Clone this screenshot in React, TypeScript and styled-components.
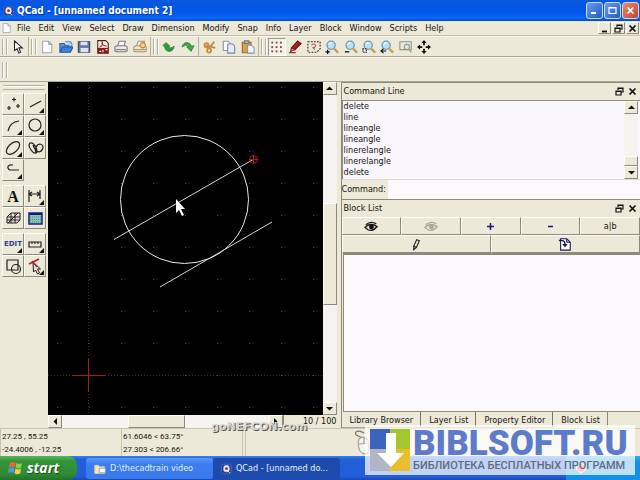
import React from "react";
import styled, { createGlobalStyle, css } from "styled-components";

const face = "#ece9d8";
const shade = "#8d8a7c";
const ui = `"DejaVu Sans Condensed", "DejaVu Sans", sans-serif`;

const GlobalStyle = createGlobalStyle`
  * { box-sizing: border-box; }
  body { margin: 0; background: ${face}; }
  button, input { font: inherit; color: inherit; margin: 0; padding: 0; border: 0; background: none; border-radius: 0; }
  svg { display: block; flex: none; }
`;

const Screen = styled.div`
  position: relative;
  display: flex;
  flex-direction: column;
  min-height: 100vh;
  font: 9px/11px ${ui};
  color: #16150f;
  background: ${face};
  overflow: hidden;
`;

const raised = css`
  border: 1px solid;
  border-color: #fffef8 ${shade} ${shade} #fffef8;
`;

/* Title bar */
const TitleBar = styled.header`
  display: flex;
  align-items: center;
  gap: 3px;
  height: 21px;
  padding: 0 1px 0 3px;
  background: linear-gradient(#0a5ae0 0, #0355e2 25%, #0458ea 60%, #0866fa 88%, #0345bd 100%);
`;
const Title = styled.h1`
  flex: 1;
  margin: 0;
  color: #fff;
  font: bold 10px/16px ${ui};
  text-shadow: 1px 1px 0 #0b3a96;
`;
const WindowButton = styled.button<{ $close?: boolean }>`
  display: grid;
  place-items: center;
  width: 17px;
  height: 17px;
  margin-left: -2px;
  border: 1px solid #c9dcfb;
  border-radius: 3px;
  color: #fff;
  background: ${(p) => (p.$close ? "linear-gradient(135deg,#e58a70,#c8432a)" : "linear-gradient(135deg,#6b9cf2,#2059cd)")};
`;

/* Menu bar */
const MenuBar = styled.nav`
  display: flex;
  align-items: center;
  gap: 8px;
  height: 15px;
  padding: 0 1px;
  border-bottom: 1px solid #c3bfae;
`;
const MenuIcon = styled.span`
  margin-right: -3px;
`;
const MenuItem = styled.button`
  line-height: 13px;
`;
const ChildButtons = styled.div`
  display: flex;
  margin-left: auto;
  gap: 1px;
`;
const ChildButton = styled.button`
  ${raised}
  display: grid;
  place-items: center;
  width: 13px;
  height: 12px;
`;

/* Toolbars */
const ToolBar = styled.div<{ $h: number }>`
  display: flex;
  align-items: center;
  height: ${(p) => p.$h}px;
  padding-left: 2px;
  border-bottom: 1px solid #aaa796;
  border-top: 1px solid #f8f6ec;
`;
const Grip = styled.span`
  width: 5px;
  height: 16px;
  margin-right: 2px;
  border: solid #b3b09f;
  border-width: 0 1px;
  box-shadow: inset 1px 0 #fff, 1px 0 #fff;
`;
const ToolGroup = styled.div<{ $w: number }>`
  display: flex;
  justify-content: space-between;
  width: ${(p) => p.$w}px;
`;
const ToolButton = styled.button<{ $on?: boolean }>`
  display: grid;
  place-items: center;
  width: 18px;
  height: 18px;
  ${(p) =>
    p.$on &&
    css`
      border: 1px solid;
      border-color: #9c998a #fff #fff #9c998a;
      background: #f3f1e8;
    `}
`;
const Divider = styled.span`
  width: 1px;
  height: 19px;
  margin: 0 2px 0 1px;
  background: #b5b2a2;
`;

/* Main area */
const Main = styled.main`
  display: flex;
  flex: 1;
  min-height: 0;
  border-bottom: 1px solid #c8c5b4;
`;
const Palette = styled.aside`
  width: 48px;
  flex: none;
  padding: 3px 2px;
`;
const PaletteGrip = styled.div`
  height: 5px;
  margin: 0 1px 3px;
  border: solid #b3b09f;
  border-width: 1px 0;
  box-shadow: inset 0 1px #fff;
`;
const PaletteGrid = styled.div`
  display: grid;
  grid-template-columns: 22px 22px;
  grid-auto-rows: 22px;
  margin-bottom: 4px;
`;
const PaletteButton = styled.button`
  ${raised}
  display: grid;
  place-items: center;
`;

const Document = styled.section`
  display: grid;
  grid-template-columns: minmax(0, 1fr) 14px;
  grid-template-rows: minmax(0, 1fr) 13px;
  flex: 289 1 0;
  min-width: 0;
`;
const Canvas = styled.div`
  background: #000;
  overflow: hidden;
`;
const VScroll = styled.div`
  display: flex;
  flex-direction: column;
  background: #f5f3f0;
`;
const HScroll = styled.div`
  display: flex;
  background: #f6f4f0;
`;
const Arrow = styled.button`
  ${raised}
  display: grid;
  place-items: center;
  flex: none;
  width: 14px;
  height: 13px;
  background: ${face};
`;
const Thumb = styled.div<{ $size: number }>`
  ${raised}
  flex: ${(p) => p.$size} 1 0;
  background: ${face};
`;
const Space = styled.div<{ $size: number }>`
  flex: ${(p) => p.$size} 1 0;
`;
const BottomRow = styled.div`
  grid-column: 1 / 3;
  display: grid;
  grid-template-columns: minmax(0, 1fr) 54px;
`;
const Zoom = styled.output`
  text-align: right;
  line-height: 12px;
  border-left: 1px solid ${shade};
`;

/* Docks */
const Docks = styled.section`
  display: flex;
  flex-direction: column;
  flex: 299 1 0;
  min-width: 0;
  margin-left: 4px;
  border-left: 1px solid ${shade};
`;
const DockHeader = styled.header`
  display: flex;
  align-items: center;
  gap: 3px;
  height: 18px;
  padding: 0 3px 0 2px;
  border-top: 1px solid ${shade};
`;
const DockTitle = styled.h2`
  flex: 1;
  margin: 0;
  font: inherit;
`;
const DockButton = styled.button`
  width: 10px;
  height: 12px;
  display: grid;
  place-items: center;
`;
const History = styled.div`
  display: flex;
  height: 79px;
  background: #f9f7fb;
  border-top: 1px solid ${shade};
  border-left: 1px solid ${shade};
  padding-right: 2px;
`;
const Lines = styled.ol`
  flex: 1;
  margin: 0;
  padding: 0 1px;
  list-style: none;
`;
const CommandRow = styled.div`
  display: flex;
  align-items: stretch;
  height: 20px;
  border-top: 1px solid #dedbd0;
`;
const CommandLabel = styled.label`
  width: 46px;
  line-height: 18px;
`;
const CommandInput = styled.input`
  flex: 1;
  min-width: 0;
  background: #fbf9fb;
`;
const ButtonRow = styled.div`
  display: flex;
  height: 18px;
`;
const BlockButton = styled.button`
  ${raised}
  flex: 1;
  display: grid;
  place-items: center;
`;
const BlockArea = styled.div`
  flex: 1;
  margin-left: 1px;
  background: #fbf9fb;
  border: solid ${shade};
  border-width: 2px 0 1px 1px;
`;
const Tabs = styled.div`
  display: flex;
  height: 16px;
`;
const Tab = styled.button<{ $on?: boolean }>`
  padding: 0 7px 0 8px;
  line-height: 14px;
  border-right: 1px solid ${(p) => (p.$on ? shade : "#77756a")};
  border-bottom: 1px solid ${(p) => (p.$on ? face : "#aaa796")};
`;

/* Status bar and task bar */
const StatusBar = styled.footer`
  display: flex;
  height: 27px;
`;
const StatusCell = styled.div<{ $w?: number }>`
  ${(p) => (p.$w ? `width: ${p.$w}px;` : "flex: 1;")}
  padding: 1px 1px 0;
  font: 8px/13px Roboto, sans-serif;
  white-space: pre;
  border-left: 1px solid #c6c3b2;
`;
const MousePad = styled.div`
  padding-left: 107px;
`;
const TaskBar = styled.footer`
  display: flex;
  height: 24px;
  background: linear-gradient(#3a80ee, #2160d8 15%, #225ddb 85%, #1a48b4);
`;
const Start = styled.button`
  display: flex;
  align-items: center;
  gap: 4px;
  width: 77px;
  padding-left: 8px;
  color: #fff;
  border-radius: 0 9px 9px 0;
  background: linear-gradient(#5eb45c, #35953a 20%, #318c35 75%, #22702a);
  font: italic bold 14px/20px "Open Sans", sans-serif;
  text-shadow: 1px 1px 1px #174d1a;
`;
const Task = styled.button<{ $active?: boolean }>`
  display: flex;
  align-items: center;
  gap: 4px;
  width: 127px;
  margin: 2px 0 1px;
  padding-left: 8px;
  color: #e4eeff;
  border-radius: 3px;
  background: ${(p) => (p.$active ? "#1e4bab" : "linear-gradient(#5c98fa,#3b7df0 30%,#3a79e9)")};
`;
const TaskList = styled.div`
  display: flex;
  flex: 1;
  margin-left: 9px;
`;
const Tray = styled.div`
  display: flex;
  align-items: center;
  width: 74px;
  padding-left: 9px;
  background: linear-gradient(#31b0f5, #128ee8 25%, #1290ea);
`;

/* Marks lying over the desktop */
const SiteMark = styled.div`
  position: absolute;
  left: 33%;
  bottom: 45px;
  color: #d9d7cf;
  font: bold 11px/16px "DejaVu Sans", sans-serif;
  text-shadow: 1px 1px 0 #55534b;
`;
const Badge = styled.aside`
  position: absolute;
  right: 5px;
  bottom: 5px;
  display: flex;
  align-items: center;
  gap: 3px;
  width: 270px;
  height: 50px;
  padding-left: 5px;
  background: rgba(255, 255, 255, 0.72);
`;
const BadgeText = styled.div`
  display: flex;
  flex-direction: column;
`;
const BadgeName = styled.strong`
  color: #5d7bcb;
  font: 900 35px/30px Roboto, sans-serif;
`;
const BadgeNote = styled.span`
  color: #626a80;
  font: 500 11px/13px Roboto, sans-serif;
  white-space: nowrap;
`;

type IconProps = { w?: number; h?: number; box?: string; children: React.ReactNode };
const Icon = ({ w = 14, h = 14, box = "0 0 16 16", children }: IconProps) => (
  <svg width={w} height={h} viewBox={box} fill="none" stroke="#222" strokeWidth="1.2" aria-hidden="true">
    {children}
  </svg>
);

const Page = () => <path d="M3 1.5h7l3.5 3.5v9.5H3z M10 1.5V5h3.5" fill="#fdfdff" stroke="#a3a8b8" />;
const PlusMark = () => <path d="M.5 13.5h5M3 11v5" stroke="#111" strokeWidth="1.5" />;
const Lens = ({ children }: { children?: React.ReactNode }) => (
  <Icon>
    <path d="m10.5 10 4.5 4.5" stroke="#c89b52" strokeWidth="2.8" />
    <circle cx="7" cy="6" r="4.7" fill="#b9e1f3" stroke="#6a9cb5" strokeWidth="1.5" />
    <path d="M4.5 5q1-2 3-2" stroke="#fff" />
    {children}
  </Icon>
);
const Printer = ({ tone = "#77777d" }: { tone?: string }) => (
  <>
    <path d="M4 7 6 1.5h7L11.5 7" fill="#fff" stroke={tone} />
    <path d="M1 8 3.5 6.5h10L15 8v4.5l-2 1H3l-2-1z" fill="#ebe9e5" stroke={tone} />
    <path d="M2 11h12" stroke={tone} />
  </>
);
const QLogo = () => (
  <Icon w={11} h={12}>
    <rect x="1" y="1" width="14" height="14" rx="3" fill="#1f3c86" stroke="#5170b9" />
    <rect x="4" y="3" width="8" height="9" rx="3" fill="#f6eaf0" stroke="#c3cbe6" />
    <circle cx="8" cy="7.5" r="2" fill="#8f2440" stroke="none" />
    <path d="m9 10 4 4" stroke="#fff" />
  </Icon>
);
const Restore = () => (
  <Icon w={9} h={9} box="0 0 9 9">
    <path d="M3 3V1h5v4H6M3 1.5h5M1 4h5v4H1zM1 4.5h5" stroke="#111" />
  </Icon>
);
const Cross = ({ color = "#111" }: { color?: string }) => (
  <Icon w={9} h={9} box="0 0 9 9">
    <path d="m1.5 1.5 6 6m0-6-6 6" stroke={color} strokeWidth="1.7" />
  </Icon>
);
const Triangle = ({ d }: { d: string }) => (
  <Icon w={7} h={7} box="0 0 7 7">
    <path d={d} fill="#111" stroke="none" />
  </Icon>
);

const files: [string, React.ReactNode][] = [
  ["New", <Icon><Page /></Icon>],
  ["Open", <Icon><path d="M1 13V4h5l1 2h6v3" fill="#5b93df" stroke="#2b5da9" /><path d="M7 2h6l2 3-1 3" fill="#b8d9fa" stroke="#5987c8" /><path d="m1 14 3-6h12l-3 6z" fill="#3f82db" stroke="#2450a0" /></Icon>],
  ["Save", <Icon><path d="M1.5 2h13v12h-13z" fill="#6377a0" stroke="#32405f" /><path d="M4 2h8v4H4z" fill="#dce2ef" stroke="none" /><path d="M4 9h9v5H4z" fill="#dfe2e8" stroke="none" /></Icon>],
  ["Export PDF", <Icon><path d="M2 .7h9l3 3V15H2z" fill="#f8f2f0" stroke="#4b1a1a" /><path d="M4 8c4-1 4-5 3-6-1 3 2 5 5 5" stroke="#b32020" /><rect x="2" y="9" width="12" height="6" fill="#8e1717" stroke="none" /><path d="M4 13h2M8 11v3M11 11h2" stroke="#fff" /></Icon>],
  ["Print", <Icon><Printer /></Icon>],
  ["Print preview", <Icon><Printer tone="#ad8d58" /><circle cx="11" cy="6" r="3" fill="#f2d391" stroke="#c38733" /></Icon>],
];
const edits: [string, React.ReactNode][] = [
  ["Undo", <Icon><path d="M1 6 5 3l4 4-2 .5q2 3 7-.5-1 6-6 6-4 0-5-5z" fill="#2f9c3c" stroke="#16702a" strokeWidth=".7" /></Icon>],
  ["Redo", <Icon><path d="M1 8q2-6 7-5 3 1 4 4l3-.5-3.5 6.5-5-5 2.500-.5q-3-3-8 .5z" fill="#3ca846" stroke="#16702a" strokeWidth=".7" /></Icon>],
];
const clips: [string, React.ReactNode][] = [
  ["Cut", <Icon><path d="m13 2-7 8M3 6l11 3" stroke="#a88957" strokeWidth="2" /><circle cx="4" cy="6" r="2.3" stroke="#d28b22" strokeWidth="2" /><circle cx="7" cy="12" r="2.3" stroke="#d28b22" strokeWidth="2" /></Icon>],
  ["Copy", <Icon><path d="M1.5 1.5H7L9.5 4v8h-8z" fill="#fff" stroke="#8793b1" /><path d="M6.5 4.5H12L14.5 7v8h-8z" fill="#e4ebfb" stroke="#7683a7" /></Icon>],
  ["Paste", <Icon><path d="M1.5 2.5h10v12h-10z" fill="#d9a343" stroke="#96681f" /><path d="M4 1h5v3H4z" fill="#b9b9bd" stroke="#777" /><path d="M7.5 6H12l3 3v6H7.5z" fill="#f2f4fb" stroke="#8992aa" /></Icon>],
];
const views: [string, React.ReactNode][] = [
  ["Grid", <Icon>{[3, 8, 13].map((y) => <path key={y} d={`M1.5 ${y}h14`} stroke="#9c3038" strokeWidth="2" strokeDasharray="2 3" />)}</Icon>],
  ["Redraw", <Icon><path d="m4 9 7-8 4 3-7 7z" fill="#a62020" stroke="#661010" /><path d="m4 9 4 2-5 2z" fill="#e3a09a" stroke="#862020" /><path d="M1 14.5h8" stroke="#741a1a" /></Icon>],
  ["Auto zoom", <Icon><path d="M1 2h14v8l-4 4H1z" stroke="#222" strokeDasharray="2 1.5" /><path d="M5 6q2-3 5 0-1 3-3 3l2 2" stroke="#c34d4d" /></Icon>],
  ["Zoom in", <Lens><PlusMark /></Lens>],
  ["Zoom out", <Lens><path d="M1 13.5h5" stroke="#111" strokeWidth="1.5" /></Lens>],
  ["Fit", <Lens><path d="M1 10h4v4H1z" stroke="#111" strokeDasharray="1.5 1" /></Lens>],
  ["Previous view", <Lens><path d="M1 12.5h6M4 10l-3 2.5L4 15" stroke="#111" /></Lens>],
  ["Zoom window", <Icon><path d="M1 2h13v9H1z" stroke="#8b948f" /><circle cx="9" cy="8" r="3" fill="#e0e9e3" stroke="#8d9993" /><path d="m11 10 3 4" stroke="#a9a78e" strokeWidth="2" /></Icon>],
  ["Pan", <Icon><path d="M8 0 5 3.5h6zM8 16l3-3.5H5zM0 8l3.5-3v6zM16 8l-3.5-3v6z" fill="#111" stroke="none" /><path d="M8 3v3M8 10v3M3 8h3M10 8h3" stroke="#111" strokeWidth="2" /></Icon>],
];

const corner = <path d="M19 14v5h-5z" fill="#111" stroke="none" />;
const tools: [string, React.ReactNode][][] = [
  [
    ["Points", <path d="M11 3.5v4M9 5.5h4M6 12v4M4 14h4M15 10v4M13 12h4" />],
    ["Lines", <><path d="M5 13 16 7" />{corner}</>],
    ["Arcs", <><path d="M5 15Q7 6 16 5" />{corner}</>],
    ["Circles", <><circle cx="10" cy="9" r="6" />{corner}</>],
    ["Ellipses", <><ellipse cx="10" cy="10" rx="8" ry="4.5" transform="rotate(-43 10 10)" />{corner}</>],
    ["Splines", <path d="M5 5c-3 3 3 11 6 10 3 0-1-11-6-10ZM11 15c-2-4 1-9 4-9 5 1 3 7-1 8-4-1-5-4-6-7" />],
    ["Polylines", <><path d="M10 5C5 4 3 8 7 10h9" />{corner}</>],
  ],
  [
    ["Text", <text x="10" y="16" textAnchor="middle" fontFamily="Liberation Serif, serif" fontSize="16" fontWeight="bold" fill="#111" stroke="none">A</text>],
    ["Dimensions", <><path d="M4 4v12M15 4v9M5 8h9M7 6 4 8l3 2M12 6l3 2-3 2" />{corner}</>],
    ["Hatch", <path d="M4 15V9l4-4h9v7l-3 3ZM8 5v10M12 5v10M4 9h13M4 12h13M5 15l10-10" strokeWidth="1" />],
    ["Raster image", <><path d="M4 5h13v11H4z" fill="#8cc4b4" stroke="#17237c" strokeWidth="1.5" /><path d="M4 6h13" stroke="#0c1a8b" strokeWidth="2" /><path d="M5 9h11M5 11.5h11M5 14h11" stroke="#3f8f86" strokeDasharray="1 1" /></>],
  ],
  [
    ["Edit", <><text x="10" y="12" textAnchor="middle" fontFamily="DejaVu Sans, sans-serif" fontSize="7" fontWeight="bold" fill="#3b3d9b" stroke="none">EDIT</text>{corner}</>],
    ["Measure", <><path d="M4 8h12v5H4zM7 8v2M10 8v2M13 8v2" />{corner}</>],
    ["Blocks", <><path d="M4 4h11v10H4z" /><circle cx="13" cy="13" r="4.5" /></>],
    ["Select", <><path d="M4 8 14 3" stroke="#b3202c" strokeWidth="1.5" /><path d="m8 6 .5 10 2-2 2 4 2-1-2-4h3z" fill="#f4ded8" strokeWidth="1" /><path d="m7 5 5 6" stroke="#b3202c" />{corner}</>],
  ],
];

const Eye = ({ color }: { color: string }) => (
  <Icon w={14} h={11} box="0 0 16 12">
    <path d="M1 7Q7 1 15 6q-5 6-10 4Z" stroke={color} strokeWidth="1.5" />
    <circle cx="8.5" cy="6.5" r="2.8" fill={color} stroke="none" />
    <path d="M2 4Q8-1 14 3" stroke={color} strokeWidth="1.5" />
  </Icon>
);

const Drawing = () => {
  const cols = Array.from({ length: 9 }, (_, i) => 9 + i * 32);
  const rows = Array.from({ length: 11 }, (_, i) => 5 + i * 32);
  return (
    <svg width="100%" height="100%" fill="none" role="img" aria-label="Circle with two parallel lines">
      {rows.map((y) => cols.map((x) => <rect key={`${x}-${y}`} x={x} y={y} width="1" height="1" fill="#4c4c4c" />))}
      <path d="M40.5 0v340M0 293.5h275" stroke="#303030" strokeDasharray="1 2" />
      <path d="M24 293.5h33M40.5 277v33" stroke="#a91f12" />
      <circle cx="136.5" cy="117.5" r="64" stroke="#e9e9e9" />
      <path d="M66 157.5 206 77M112 205l112-65" stroke="#d4d4d4" />
      <circle cx="205.5" cy="77.5" r="4" stroke="#b51515" />
      <path d="M201 77.5h9M205.5 73v9" stroke="#b51515" />
      <path d="M128 117v14l3-3 3 6 2-1-3-6h4z" fill="#fff" />
    </svg>
  );
};

const tool = ([name, icon]: [string, React.ReactNode]) => (
  <ToolButton key={name} aria-label={name} $on={name === "Grid"}>{icon}</ToolButton>
);

export default function App() {
  return (
    <Screen>
      <GlobalStyle />
      <TitleBar>
        <QLogo />
        <Title>QCad - [unnamed document 2]</Title>
        <WindowButton aria-label="Minimize"><Icon w={9} h={9} box="0 0 9 9"><path d="M1 7h5" stroke="#fff" strokeWidth="2" /></Icon></WindowButton>
        <WindowButton aria-label="Maximize"><Icon w={9} h={9} box="0 0 9 9"><path d="M1 1.5h7v6H1zM1 2h7" stroke="#fff" /></Icon></WindowButton>
        <WindowButton aria-label="Close" $close><Cross color="#fff" /></WindowButton>
      </TitleBar>
      <MenuBar>
        <MenuIcon><Icon w={11} h={12}><Page /></Icon></MenuIcon>
        {["File", "Edit", "View", "Select", "Draw", "Dimension", "Modify", "Snap", "Info", "Layer", "Block", "Window", "Scripts", "Help"].map((m) => (
          <MenuItem key={m}>{m}</MenuItem>
        ))}
        <ChildButtons>
          <ChildButton aria-label="Minimize document"><Icon w={9} h={9} box="0 0 9 9"><path d="M2 7.5h5" stroke="#111" strokeWidth="1.8" /></Icon></ChildButton>
          <ChildButton aria-label="Restore document"><Restore /></ChildButton>
          <ChildButton aria-label="Close document"><Cross /></ChildButton>
        </ChildButtons>
      </MenuBar>
      <ToolBar $h={21}>
        <Grip />
        <ToolButton aria-label="Pointer"><Icon><path d="M4 1v11l3-2 2 5 2-1-2-5h4z" fill="#fff" /></Icon></ToolButton>
        <Divider />
        <Grip />
        <ToolGroup $w={111}>{files.map(tool)}</ToolGroup>
        <Divider />
        <Grip />
        <ToolGroup $w={37}>{edits.map(tool)}</ToolGroup>
        <Divider />
        <ToolGroup $w={56}>{clips.map(tool)}</ToolGroup>
        <Divider />
        <Grip />
        <ToolGroup $w={165}>{views.map(tool)}</ToolGroup>
      </ToolBar>
      <ToolBar $h={25}><Grip /></ToolBar>
      <Main>
        <Palette>
          <PaletteGrip />
          {tools.map((group, i) => (
            <PaletteGrid key={i}>
              {group.map(([name, icon]) => (
                <PaletteButton key={name} aria-label={name}><Icon w={20} h={20} box="0 0 20 20">{icon}</Icon></PaletteButton>
              ))}
            </PaletteGrid>
          ))}
        </Palette>
        <Document>
          <Canvas><Drawing /></Canvas>
          <VScroll>
            <Arrow aria-label="Scroll up"><Triangle d="M0 5h7L3.5 1.5z" /></Arrow>
            <Space $size={109} /><Thumb $size={100} /><Space $size={98} />
            <Arrow aria-label="Scroll down"><Triangle d="M0 2h7L3.5 5.5z" /></Arrow>
          </VScroll>
          <BottomRow>
            <HScroll>
              <Arrow aria-label="Scroll left"><Triangle d="M5 0v7L1.5 3.5z" /></Arrow>
              <Space $size={67} /><Thumb $size={55} /><Space $size={85} />
              <Arrow aria-label="Scroll right"><Triangle d="M2 0v7l3.5-3.5z" /></Arrow>
            </HScroll>
            <Zoom>10 / 100</Zoom>
          </BottomRow>
        </Document>
        <Docks>
          <DockHeader>
            <DockTitle>Command Line</DockTitle>
            <DockButton aria-label="Float command line"><Restore /></DockButton>
            <DockButton aria-label="Close command line"><Cross /></DockButton>
          </DockHeader>
          <History>
            <Lines>
              {["delete", "line", "lineangle", "lineangle", "linerelangle", "linerelangle", "delete"].map((t, i) => <li key={i}>{t}</li>)}
            </Lines>
            <VScroll>
              <Arrow aria-label="Scroll history up"><Triangle d="M0 5h7L3.5 1.5z" /></Arrow>
              <Space $size={44} /><Thumb $size={8} />
              <Arrow aria-label="Scroll history down"><Triangle d="M0 2h7L3.5 5.5z" /></Arrow>
            </VScroll>
          </History>
          <CommandRow>
            <CommandLabel htmlFor="command">Command:</CommandLabel>
            <CommandInput id="command" />
          </CommandRow>
          <DockHeader>
            <DockTitle>Block List</DockTitle>
            <DockButton aria-label="Float block list"><Restore /></DockButton>
            <DockButton aria-label="Close block list"><Cross /></DockButton>
          </DockHeader>
          <ButtonRow>
            <BlockButton aria-label="Show all"><Eye color="#151515" /></BlockButton>
            <BlockButton aria-label="Hide all"><Eye color="#aaa89c" /></BlockButton>
            <BlockButton aria-label="Add block"><Icon w={9} h={9} box="0 0 9 9"><path d="M1 4.5h7M4.5 1v7" stroke="#14147c" strokeWidth="1.5" /></Icon></BlockButton>
            <BlockButton aria-label="Remove block"><Icon w={9} h={9} box="0 0 9 9"><path d="M2 4.5h5" stroke="#14147c" strokeWidth="1.5" /></Icon></BlockButton>
            <BlockButton>a|b</BlockButton>
          </ButtonRow>
          <ButtonRow>
            <BlockButton aria-label="Edit block"><Icon w={12} h={13}><path d="M5 10 9 1.5l3.5 1.5-4 9L5 15zM5 10l3.5 2" strokeWidth="1.5" /></Icon></BlockButton>
            <BlockButton aria-label="Insert block"><Icon w={14} h={14}><path d="M3 2h7l4 4v9H3zM10 2v4h4" fill="#fff" stroke="#16165c" /><path d="M1 4q7-1 7 4" stroke="#16165c" strokeWidth="1.5" /><path d="M5 8h6l-3 4z" fill="#16165c" stroke="none" /></Icon></BlockButton>
          </ButtonRow>
          <BlockArea />
          <Tabs role="tablist">
            {["Library Browser", "Layer List", "Property Editor", "Block List"].map((t) => (
              <Tab key={t} role="tab" aria-selected={t === "Block List"} $on={t === "Block List"}>{t}</Tab>
            ))}
          </Tabs>
        </Docks>
      </Main>
      <StatusBar>
        <StatusCell $w={121}>{"27.25 , 55.25\n-24.4006 , -12.25"}</StatusCell>
        <StatusCell $w={121}>{"61.6046 < 63.75°\n27.303 < 206.66°"}</StatusCell>
        <StatusCell $w={3} />
        <StatusCell>
          <MousePad>
            <Icon w={16} h={25} box="0 0 16 25">
              <path d="M9 8C4 6 0 5 2 2q3-2 8 1" stroke="#77756d" />
              <path d="M5 9q4-4 9 1l1 12q-5 4-9-1-3-6-1-12ZM10 8v6M5 14l9-1" fill="#f4f3ee" stroke="#a19f96" />
            </Icon>
          </MousePad>
        </StatusCell>
      </StatusBar>
      <TaskBar>
        <Start>
          <Icon w={15} h={15}>
            <g stroke="none">
              <path d="M2 2q3-2 6 0L7 7Q4 5 1 7z" fill="#ee6436" />
              <path d="M9 2q3 2 6 0l-1 5q-3 2-6 0z" fill="#8bd04e" />
              <path d="M1 8q3-2 6 0l-1 5q-3-2-6 0z" fill="#5c8cf0" />
              <path d="M8 8q3 2 6 0l-1 5q-3 2-6 0z" fill="#f8cf3f" />
            </g>
          </Icon>
          start
        </Start>
        <TaskList>
          <Task>
            <Icon w={12} h={12}><path d="M1 3h5l1 2h7v9H1z" fill="#f5e6b2" stroke="#d8caa0" /><path d="M7 7h8v6H7z" fill="#fff" stroke="#8da4ce" /></Icon>
            D:\thecadtrain video
          </Task>
          <Task $active><QLogo />QCad - [unnamed do...</Task>
        </TaskList>
        <Tray>
          <Icon w={12} h={12}><circle cx="8" cy="8" r="6" fill="#e9504b" stroke="#fff" /></Icon>
        </Tray>
      </TaskBar>
      <SiteMark>goNEFCON.com</SiteMark>
      <Badge>
        <Icon w={40} h={42} box="0 0 40 42">
          <g stroke="none">
            <path d="M0 0h20v20H0z" fill="#3c63bd" /><path d="M20 0h20v20H20z" fill="#a5c72e" />
            <path d="M0 20h20v22H0z" fill="#b1b6c4" /><path d="M20 20h20v22H20z" fill="#eabf2d" />
            <path d="M16 4h10v20h8L21 38 7 24h9z" fill="#fff" />
          </g>
        </Icon>
        <BadgeText>
          <BadgeName>BIBLSOFT.RU</BadgeName>
          <BadgeNote>БИБЛИОТЕКА БЕСПЛАТНЫХ ПРОГРАММ</BadgeNote>
        </BadgeText>
      </Badge>
    </Screen>
  );
}
